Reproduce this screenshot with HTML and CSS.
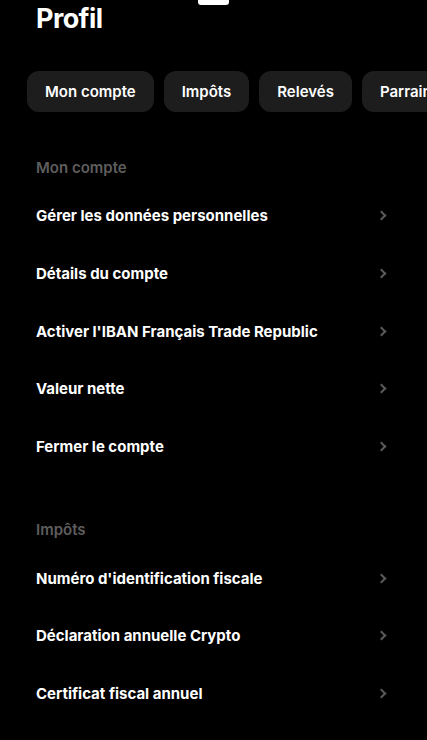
FILE: index.html
```html
<!DOCTYPE html>
<html>
<head>
    <title>Profil</title>
    <meta name="viewport" content="width=device-width, initial-scale=1.0">
    <link rel="stylesheet" href="styles.css">
</head>
<body>
    <div class="handle"></div>
    <h1 class="title">Profil</h1>

    <div class="tabs">
        <button class="tab">Mon compte</button>
        <button class="tab">Impôts</button>
        <button class="tab">Relevés</button>
        <button class="tab">Parrainage</button>
    </div>

    <section class="group">
        <h2 class="group-title">Mon compte</h2>
        <a class="row">Gérer les données personnelles<span class="chevron"></span></a>
        <a class="row">Détails du compte<span class="chevron"></span></a>
        <a class="row">Activer l'IBAN Français Trade Republic<span class="chevron"></span></a>
        <a class="row">Valeur nette<span class="chevron"></span></a>
        <a class="row">Fermer le compte<span class="chevron"></span></a>
    </section>

    <section class="group">
        <h2 class="group-title">Impôts</h2>
        <a class="row">Numéro d'identification fiscale<span class="chevron"></span></a>
        <a class="row">Déclaration annuelle Crypto<span class="chevron"></span></a>
        <a class="row">Certificat fiscal annuel<span class="chevron"></span></a>
    </section>
</body>
</html>
```

FILE: styles.css
```css
* {
    box-sizing: border-box;
}

body {
    margin: 0;
    background: #000;
    color: #fff;
    font-family: Inter, "Noto Sans", sans-serif;
    overflow: hidden;
}

.handle {
    width: 31px;
    height: 5px;
    margin: 0 auto;
    background: #fff;
    border-radius: 0 0 3px 3px;
}

.title {
    margin: 0;
    padding: 0 36px;
    font-size: 27px;
    font-weight: 700;
    letter-spacing: -0.6px;
    line-height: 28px;
}

.tabs {
    display: flex;
    gap: 10px;
    padding: 38px 0 0 27px;
    white-space: nowrap;
    overflow: hidden;
}

.tab {
    flex: none;
    height: 41px;
    padding: 0 18px;
    border: none;
    border-radius: 12px;
    background: #1d1d1d;
    color: #fff;
    font-family: inherit;
    font-size: 15px;
    font-weight: 600;
}

.group {
    padding: 0 36px;
}

.group:first-of-type {
    margin-top: 46px;
}

.group + .group {
    margin-top: 45px;
}

.group-title {
    margin: 0;
    height: 20px;
    line-height: 20px;
    color: #5e5e5e;
    font-size: 15px;
    font-weight: 600;
}

.row {
    display: flex;
    align-items: center;
    justify-content: space-between;
    height: 57.7px;
    padding-right: 6px;
    font-size: 15px;
    font-weight: 700;
}

.group-title + .row {
    margin-top: 9px;
}

.chevron {
    width: 7px;
    height: 7px;
    border-top: 2px solid #5a5a5a;
    border-right: 2px solid #5a5a5a;
    transform: rotate(45deg);
}
```
